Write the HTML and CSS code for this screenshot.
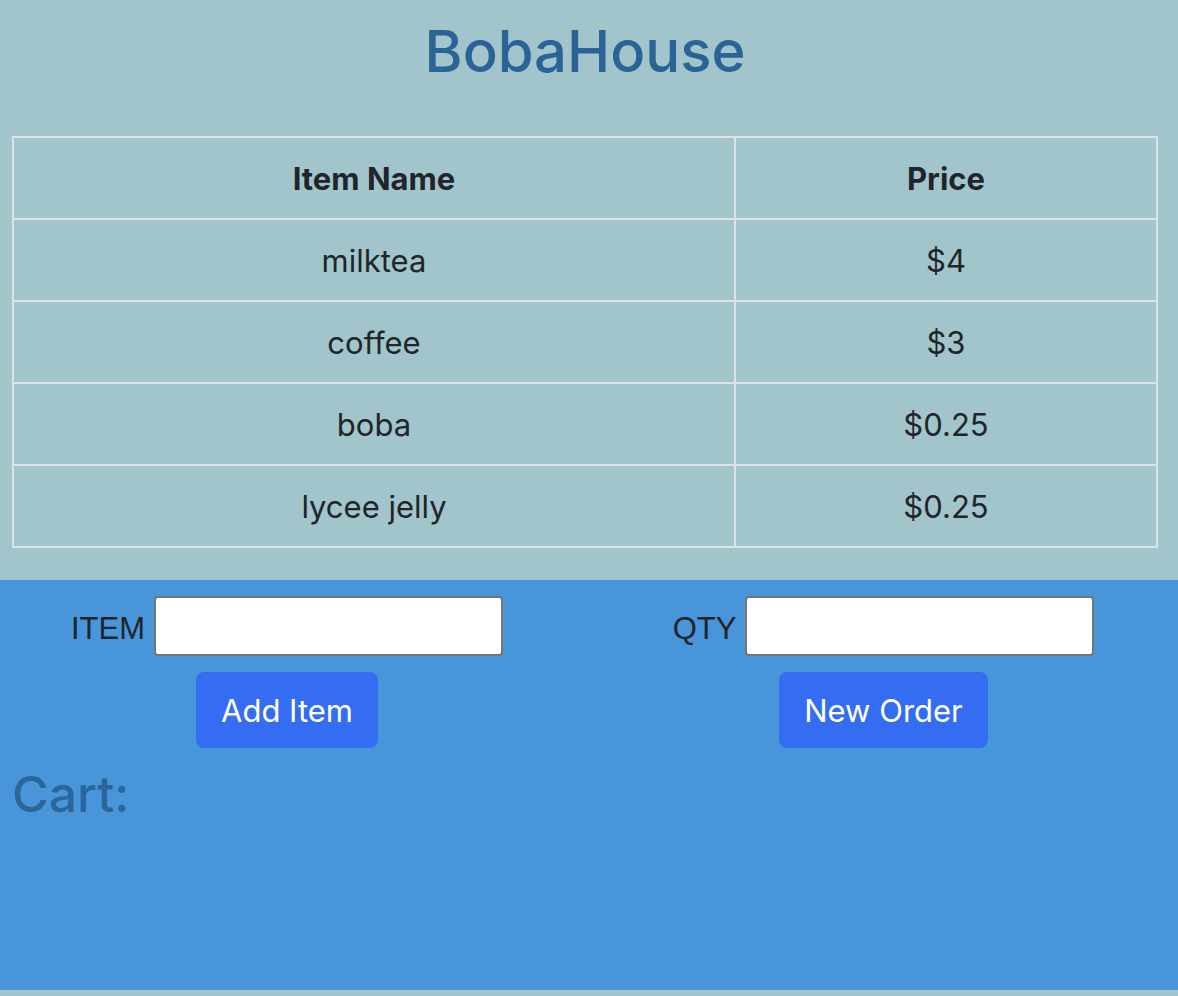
FILE: index.html
```html
<!DOCTYPE html>
<html lang="en">
<head>
<meta charset="utf-8">
<title>BobaHouse</title>
<link rel="stylesheet" href="styles.css">
</head>
<body>
<header class="top">
  <h1 class="title">BobaHouse</h1>
</header>
<main class="menu-wrap">
  <table class="menu">
    <colgroup><col class="col-name"><col class="col-price"></colgroup>
    <thead>
      <tr><th>Item Name</th><th>Price</th></tr>
    </thead>
    <tbody>
      <tr><td>milktea</td><td>$4</td></tr>
      <tr><td>coffee</td><td>$3</td></tr>
      <tr><td>boba</td><td>$0.25</td></tr>
      <tr><td>lycee jelly</td><td>$0.25</td></tr>
    </tbody>
  </table>
</main>
<section class="order">
  <div class="controls">
    <div class="ctrl">
      <label class="field"><span class="label">ITEM</span><input class="input" type="text"></label>
      <button class="btn" type="button">Add Item</button>
    </div>
    <div class="ctrl">
      <label class="field"><span class="label">QTY</span><input class="input" type="text"></label>
      <button class="btn" type="button">New Order</button>
    </div>
  </div>
  <h2 class="cart">Cart:</h2>
</section>
</body>
</html>
```
FILE: styles.css
```css
html {
  background: #a2c5cc;
}
body {
  margin: 0;
  font-family: Inter, "Noto Sans", sans-serif;
  color: #212529;
  font-size: 32px;
  line-height: 48px;
}
.top {
  padding-top: 16px;
}
.title {
  margin: 0;
  text-align: center;
  font-size: 58px;
  line-height: 70px;
  font-weight: 500;
  color: #2a6496;
  padding-right: 8px;
}
.menu-wrap {
  padding: 50px 12px 0;
}
.menu {
  width: 1146px;
  border-collapse: collapse;
  border: 2px solid #dee2e6;
}
.col-name { width: 722px; }
.menu th,
.menu td {
  border: 2px solid #dee2e6;
  padding: 17px 16px 15px;
  text-align: center;
  font-size: 31px;
}
.menu th { font-weight: 700; }
.order {
  margin-top: 32px;
  background: #4896d9;
  min-height: 410px;
  padding-top: 16px;
  box-sizing: border-box;
}
.controls {
  display: grid;
  grid-template-columns: 574px 1fr;
  column-gap: 15px;
}
.ctrl {
  display: flex;
  flex-direction: column;
  align-items: center;
  gap: 16px;
}
.field {
  display: flex;
  align-items: center;
  gap: 9px;
}
.label {
  font-family: "Liberation Sans", Arial, sans-serif;
  font-size: 31px;
  color: #212529;
  padding-top: 6px;
}
.input {
  width: 349px;
  height: 60px;
  box-sizing: border-box;
  border: 2px solid #767676;
  border-radius: 4px;
  background: #fff;
  margin: 0;
}
.btn {
  font-family: Inter, "Noto Sans", sans-serif;
  font-size: 31px;
  line-height: 48px;
  color: #fff;
  background: #346df2;
  border: 2px solid #346df2;
  border-radius: 8px;
  padding: 13px 23px 11px;
  margin: 0;
}
.cart {
  margin: 15px 0 0 12px;
  font-size: 50px;
  line-height: 62px;
  font-weight: 500;
  color: #2b669b;
}
```
